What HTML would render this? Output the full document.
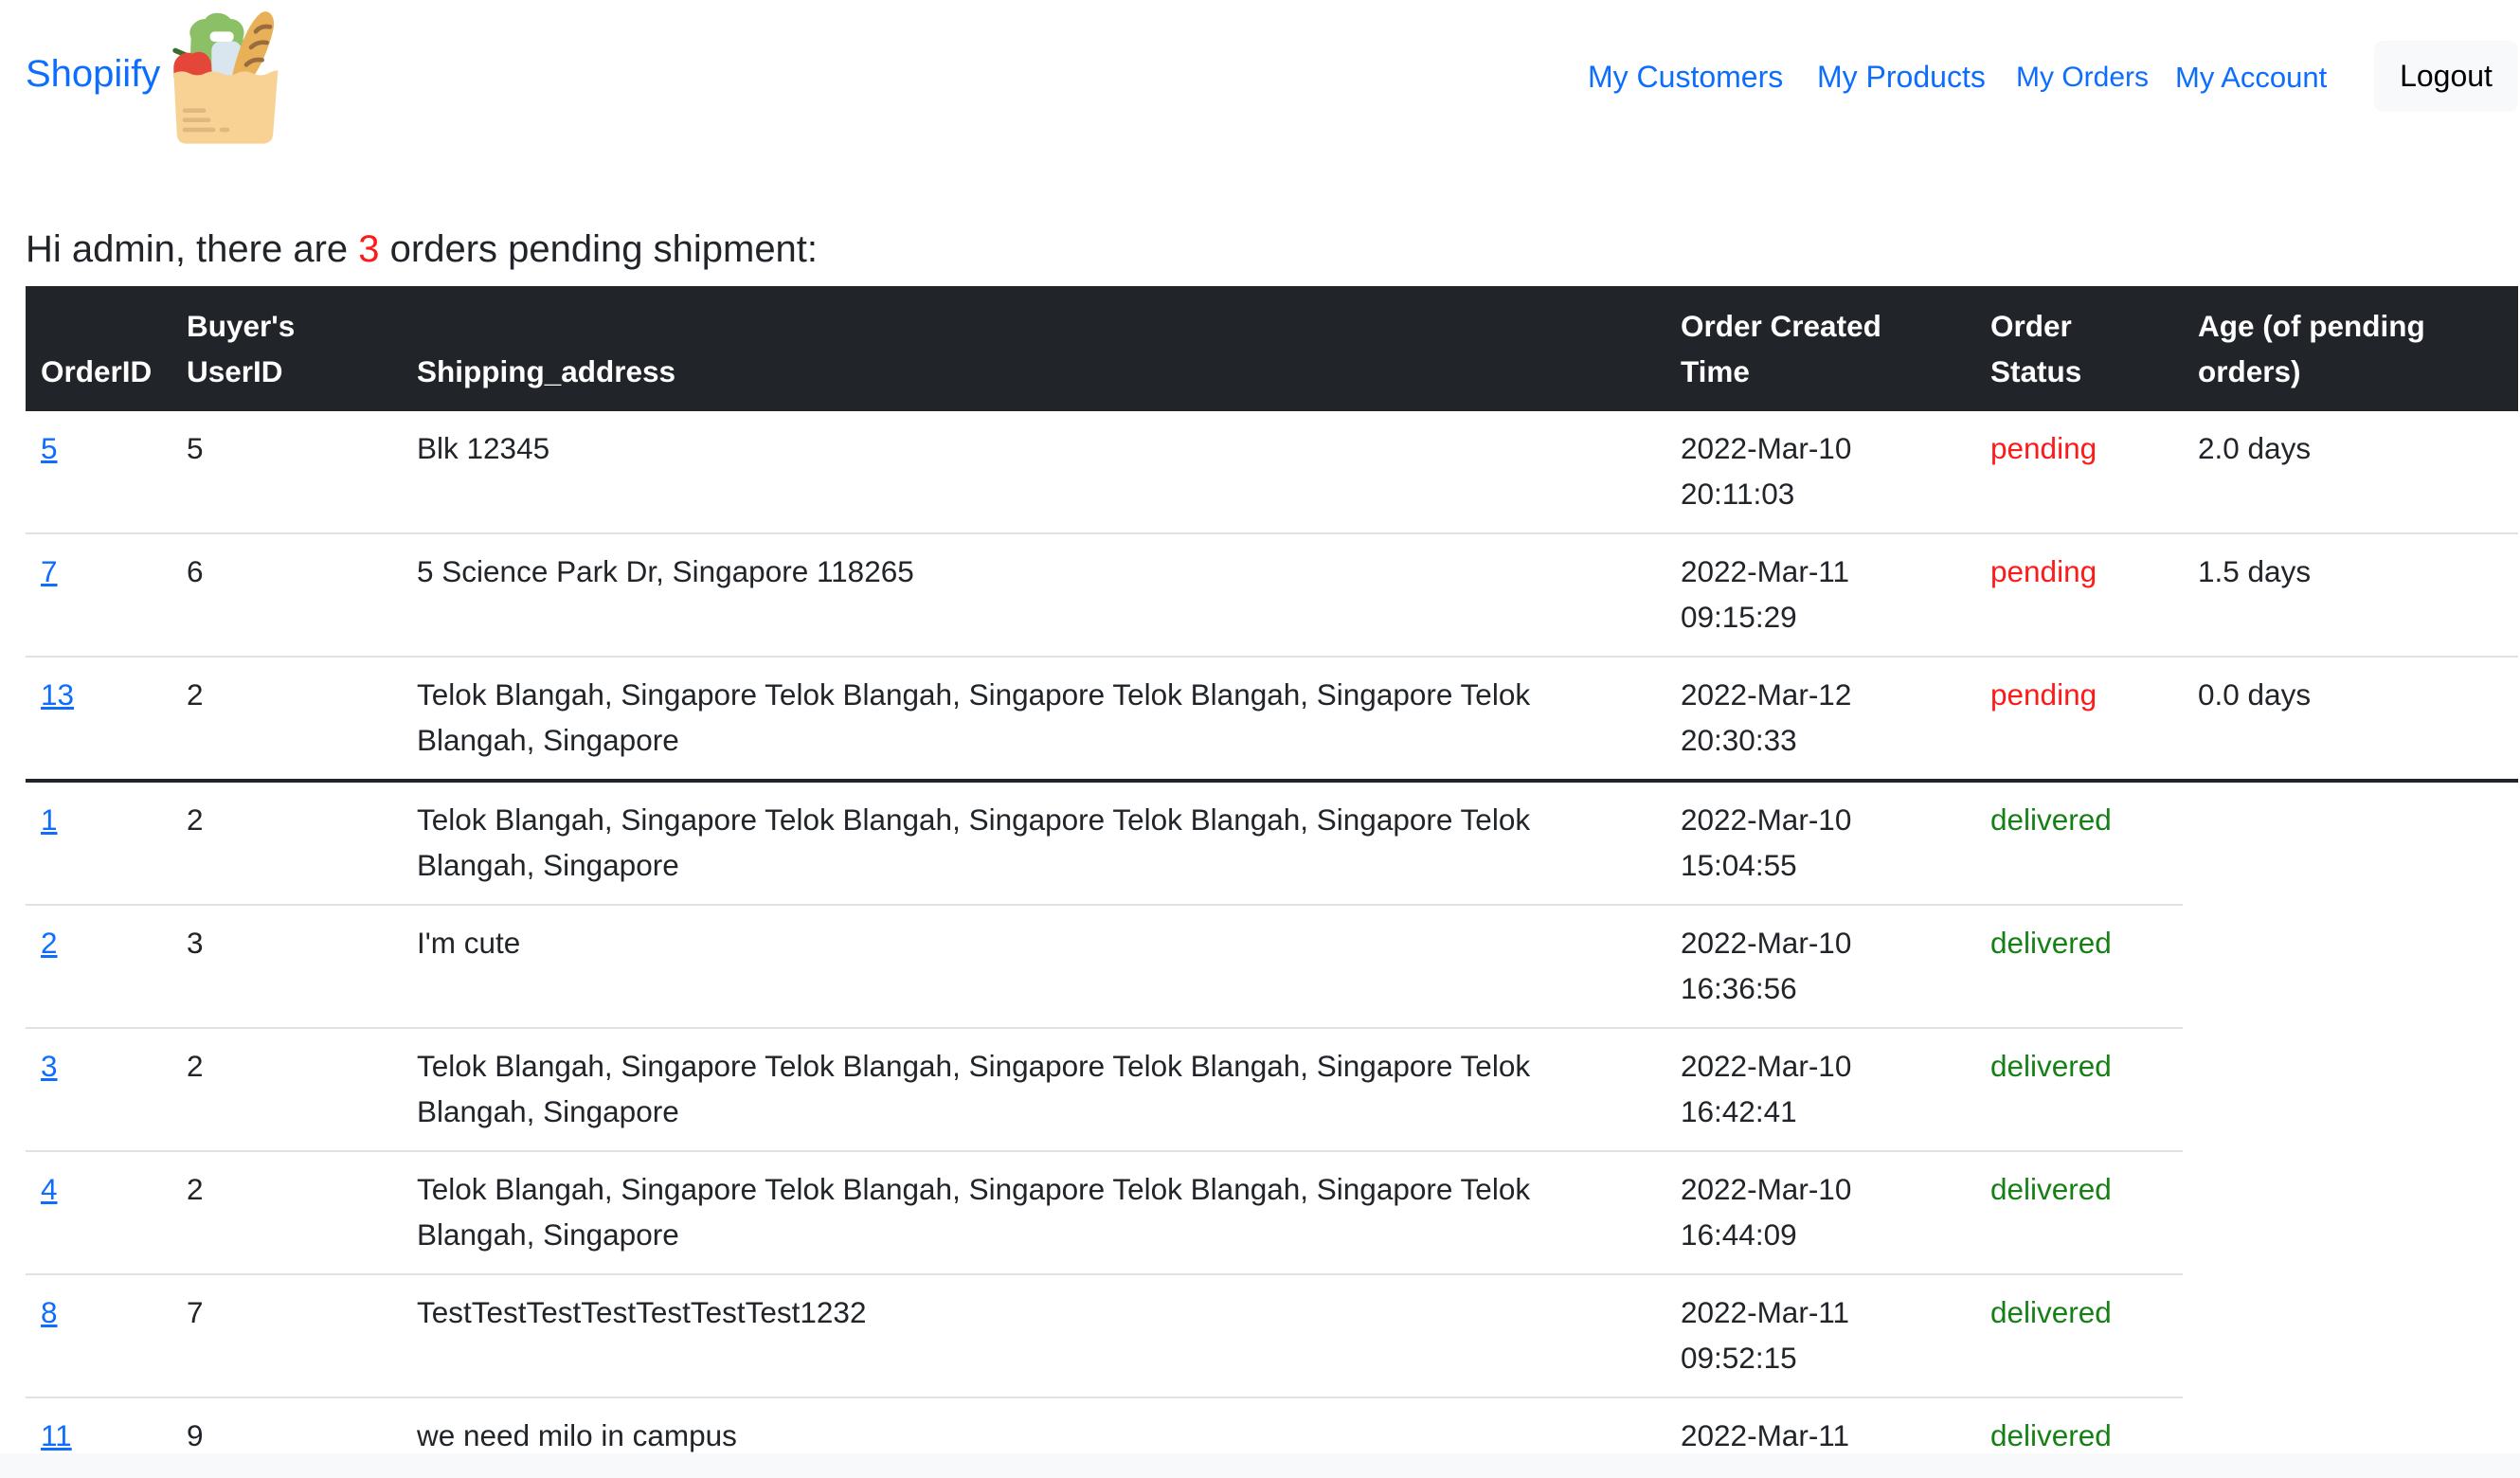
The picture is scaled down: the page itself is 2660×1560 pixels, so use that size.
<!DOCTYPE html>
<html><head><meta charset="utf-8">
<style>
*{box-sizing:border-box;margin:0;padding:0}
html,body{width:2660px;height:1560px;overflow:hidden;background:#fff;font-family:"Liberation Sans",sans-serif;color:#212529}
.wrap{position:absolute;left:0;top:0;width:2660px;height:1534px;overflow:hidden}
.nav a{position:absolute;top:58px;font-size:32px;line-height:47px;color:#0d6efd;text-decoration:none;white-space:nowrap}
.brand{position:absolute;left:27px;top:54px;font-size:40px;line-height:48px;color:#0d6efd}
.logout{position:absolute;left:2506px;top:43px;width:152px;height:75px;background:#f8f9fa;border-radius:10px;font-size:32px;line-height:75px;text-align:center;color:#000}
h4{position:absolute;left:27px;top:238px;font-size:40px;line-height:50px;font-weight:normal;color:#212529}
table{position:absolute;left:27px;top:302px;width:2631px;border-collapse:collapse;table-layout:fixed;font-size:31.5px;line-height:47.5px}
th{background:#212529;color:#fff;font-weight:bold;text-align:left;vertical-align:bottom;padding:16px 16px 18px;height:132px}
td{vertical-align:top;padding:16px 16px 17px;border-bottom:2px solid #dee2e6;white-space:nowrap}
tr.last td{border-bottom:4px solid #212529}
td.e{border-bottom:none}
td a{color:#0d6efd;text-decoration:underline}
.p{color:#ff1a1a}.d{color:#168016}
.strip{position:absolute;left:0;top:1534px;width:2660px;height:26px;background:#f8f9fa}
</style></head><body>
<div class="wrap">
<div class="brand">Shopiify</div>
<svg style="position:absolute;left:160px;top:0" width="150" height="160" viewBox="0 0 450 480">
<path d="M125 120 C110 90 140 60 170 60 C185 35 230 35 250 60 C280 60 300 90 290 120 L290 240 L120 240 Z" fill="#8bc066"/>
<rect x="190" y="130" width="95" height="115" rx="30" fill="#d9e6ef"/>
<rect x="185" y="100" width="75" height="32" rx="14" fill="#fff"/>
<path d="M255 240 C275 150 310 70 345 42 C370 25 395 50 385 95 C370 160 340 220 320 245 Z" fill="#e9b157"/>
<path d="M330 100 q15 -20 45 -15 M315 150 q20 -20 50 -15 M300 205 q20 -20 50 -15" stroke="#9a6b3e" stroke-width="14" fill="none" stroke-linecap="round"/>
<path d="M75 160 L110 175" stroke="#3d6b2a" stroke-width="16" stroke-linecap="round"/>
<path d="M70 215 C70 175 110 160 130 170 C155 155 190 170 190 215 L190 245 L70 245 Z" fill="#e5463a"/>
<path d="M70 232 q25 -12 50 0 q25 12 50 0 q25 -12 50 0 q25 12 50 0 q25 -12 50 0 q25 12 50 0 q20 -10 30 -8 L385 420 Q385 455 350 455 L110 455 Q80 455 80 420 Z" fill="#f8d294"/>
<g stroke="#e0b87f" stroke-width="14" stroke-linecap="round"><path d="M105 350 H165"/><path d="M105 380 H180"/><path d="M105 411 H195"/><path d="M222 411 H240"/></g>
</svg>
<div class="nav">
<a style="left:1676px">My Customers</a>
<a style="left:1918px">My Products</a>
<a style="left:2128px;font-size:30px">My Orders</a>
<a style="left:2296px;font-size:31px">My Account</a>
</div>
<div class="logout">Logout</div>
<h4>Hi admin, there are <span style="color:#ff1a1a">3</span> orders pending shipment:</h4>
<table>
<colgroup><col style="width:154px"><col style="width:243px"><col style="width:1334px"><col style="width:327px"><col style="width:219px"><col style="width:354px"></colgroup>
<tr><th>OrderID</th><th>Buyer's<br>UserID</th><th>Shipping_address</th><th>Order Created<br>Time</th><th>Order<br>Status</th><th>Age (of pending<br>orders)</th></tr>
<tr><td><a>5</a></td><td>5</td><td>Blk 12345</td><td>2022-Mar-10<br>20:11:03</td><td class="p">pending</td><td>2.0 days</td></tr>
<tr><td><a>7</a></td><td>6</td><td>5 Science Park Dr, Singapore 118265</td><td>2022-Mar-11<br>09:15:29</td><td class="p">pending</td><td>1.5 days</td></tr>
<tr class="last"><td><a>13</a></td><td>2</td><td>Telok Blangah, Singapore Telok Blangah, Singapore Telok Blangah, Singapore Telok<br>Blangah, Singapore</td><td>2022-Mar-12<br>20:30:33</td><td class="p">pending</td><td>0.0 days</td></tr>
<tr><td><a>1</a></td><td>2</td><td>Telok Blangah, Singapore Telok Blangah, Singapore Telok Blangah, Singapore Telok<br>Blangah, Singapore</td><td>2022-Mar-10<br>15:04:55</td><td class="d">delivered</td><td class="e"></td></tr>
<tr><td><a>2</a></td><td>3</td><td>I'm cute</td><td>2022-Mar-10<br>16:36:56</td><td class="d">delivered</td><td class="e"></td></tr>
<tr><td><a>3</a></td><td>2</td><td>Telok Blangah, Singapore Telok Blangah, Singapore Telok Blangah, Singapore Telok<br>Blangah, Singapore</td><td>2022-Mar-10<br>16:42:41</td><td class="d">delivered</td><td class="e"></td></tr>
<tr><td><a>4</a></td><td>2</td><td>Telok Blangah, Singapore Telok Blangah, Singapore Telok Blangah, Singapore Telok<br>Blangah, Singapore</td><td>2022-Mar-10<br>16:44:09</td><td class="d">delivered</td><td class="e"></td></tr>
<tr><td><a>8</a></td><td>7</td><td>TestTestTestTestTestTestTest1232</td><td>2022-Mar-11<br>09:52:15</td><td class="d">delivered</td><td class="e"></td></tr>
<tr><td><a>11</a></td><td>9</td><td>we need milo in campus</td><td>2022-Mar-11<br>10:00:00</td><td class="d">delivered</td><td class="e"></td></tr>
</table>
</div>
<div class="strip"></div>
</body></html>
